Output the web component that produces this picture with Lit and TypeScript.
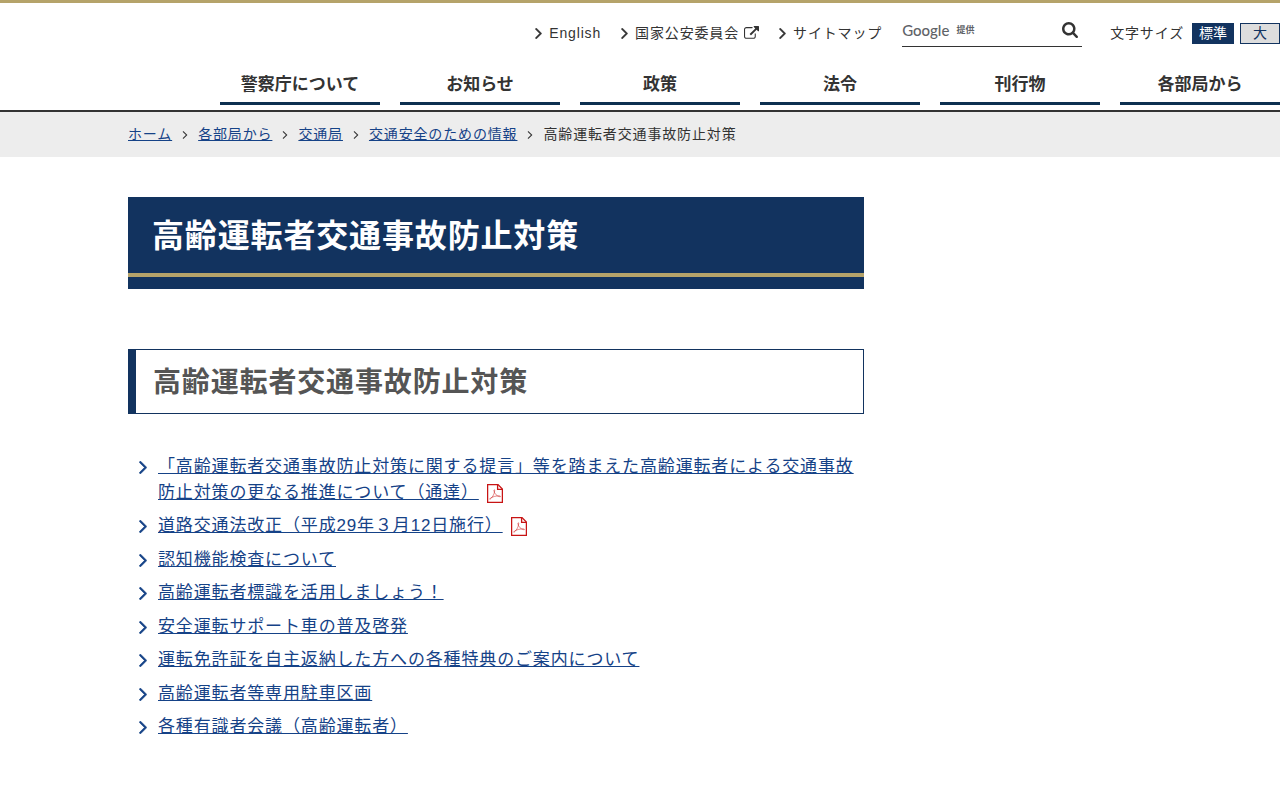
import { LitElement, html, css } from "lit";
import { customElement, state } from "lit/decorators.js";

const angle = (cls: string) => html`<svg class=${cls} viewBox="576 448 608 1024" aria-hidden="true">
  <path d="M1171 960q0 13-10 23l-466 466q-10 10-23 10t-23-10l-50-50q-10-10-10-23t10-23l393-393-393-393q-10-10-10-23t10-23l50-50q10-10 23-10t23 10l466 466q10 10 10 23z"/>
</svg>`;

const external = html`<svg class="external" viewBox="0 0 1792 1792" role="img" aria-label="外部リンク">
  <path d="M1408 928v320q0 119-84.5 203.5t-203.5 84.5h-832q-119 0-203.5-84.5t-84.5-203.5v-832q0-119 84.5-203.5t203.5-84.5h704q14 0 23 9t9 23v64q0 14-9 23t-23 9h-704q-66 0-113 47t-47 113v832q0 66 47 113t113 47h832q66 0 113-47t47-113v-320q0-14 9-23t23-9h64q14 0 23 9t9 23zm384-864v512q0 26-19 45t-45 19-45-19l-176-176-652 652q-10 10-23 10t-23-10l-114-114q-10-10-10-23t10-23l652-652-176-176q-19-19-19-45t19-45 45-19h512q26 0 45 19t19 45z"/>
</svg>`;

const magnifier = html`<svg class="magnifier" viewBox="64 128 1664 1664" aria-hidden="true">
  <path d="M1216 832q0-185-131.5-316.5t-316.5-131.5-316.5 131.5-131.5 316.5 131.5 316.5 316.5 131.5 316.5-131.5 131.5-316.5zm512 832q0 52-38 90t-90 38q-54 0-90-38l-343-342q-179 124-399 124-143 0-273.5-55.5t-225-150-150-225-55.5-273.5 55.5-273.5 150-225 225-150 273.5-55.5 273.5 55.5 225 150 150 225 55.5 273.5q0 220-124 399l343 343q37 37 37 90z"/>
</svg>`;

const pdf = html`<svg class="pdf" viewBox="0 0 16 19" role="img" aria-label="PDF">
  <path class="sheet" d="M.6.6H11L15.4 5V18.4H.6Z"/>
  <path class="sheet" d="M10.6 .8V5.3H15.2"/>
  <path class="mark" d="M3 15.2C4.6 14.6 7.4 10.4 7.7 6.6C7.8 5.4 6.8 5.4 6.9 6.6C7.2 9.4 9.8 12.4 13 12.8C13.8 12.8 13.6 12 12.6 11.9C9.4 11.7 5.6 12.6 3.4 14.2C2.6 14.8 2.4 15.4 3 15.2"/>
</svg>`;

const sections = ["警察庁について", "お知らせ", "政策", "法令", "刊行物", "各部局から"];
const trail = ["ホーム", "各部局から", "交通局", "交通安全のための情報"];
const title = "高齢運転者交通事故防止対策";
const topics = [
  { text: "「高齢運転者交通事故防止対策に関する提言」等を踏まえた高齢運転者による交通事故防止対策の更なる推進について（通達）", pdf: true },
  { text: "道路交通法改正（平成29年３月12日施行）", pdf: true },
  { text: "認知機能検査について" },
  { text: "高齢運転者標識を活用しましょう！" },
  { text: "安全運転サポート車の普及啓発" },
  { text: "運転免許証を自主返納した方への各種特典のご案内について" },
  { text: "高齢運転者等専用駐車区画" },
  { text: "各種有識者会議（高齢運転者）" },
];

@customElement("site-header")
class SiteHeader extends LitElement {
  @state() private query = "";

  static styles = css`
    :host { display: block; border-top: 3px solid #b5a36a; border-bottom: 2px solid #333; }
    * { box-sizing: border-box; }
    svg { fill: currentColor; flex: none; }
    .tools { display: flex; justify-content: flex-end; align-items: center; padding-top: 16px; font-size: 14px; line-height: 28px; }
    .links { display: flex; gap: 20px; margin: 0 20px 0 0; padding: 0; list-style: none; }
    .links a { display: flex; align-items: center; gap: 7px; color: #333; text-decoration: none; }
    .angle { width: 7px; height: 11px; stroke: currentColor; stroke-width: 50; }
    .label { display: flex; align-items: center; gap: 5px; }
    .external { width: 15px; height: 15px; }
    .search { display: grid; grid-template-columns: minmax(0, 1fr) 24px; width: 180px; height: 28px; margin-right: 28px; border-bottom: 1px solid #333; }
    .brand { grid-area: 1 / 1; display: flex; align-items: center; gap: 7px; height: 22px; color: #5f6368; font: 500 15px/22px Lato, "Liberation Sans", sans-serif; letter-spacing: 0; pointer-events: none; z-index: 1; }
    .offer { font: 700 9px/22px "Liberation Sans", "Noto Sans CJK JP", sans-serif; }
    .query { grid-area: 1 / 1 / 2 / 2; width: 100%; border: 0; padding: 0; background: transparent; font: inherit; color: #333; outline: none; }
    .go { border: 0; padding: 0 4px 0 0; height: 22px; background: none; color: #333; display: flex; align-items: center; justify-content: flex-end; }
    .magnifier { width: 16px; height: 16px; }
    .sizes { display: flex; align-items: center; gap: 6px; }
    .caption { margin-right: 2px; }
    .size { height: 21px; border: 1px solid #12335f; padding: 0 12px; font: inherit; letter-spacing: 0; line-height: 19px; background: #ddd; color: #12335f; }
    .size.on { padding: 0 6px; background: #12335f; color: #fff; }
    .nav { display: grid; grid-template-columns: repeat(6, 160px); justify-content: end; gap: 20px; margin: 0; padding: 25px 0 5px; list-style: none; }
    .nav a { display: block; border-bottom: 3px solid #0d3050; padding-bottom: 4px; text-align: center; font-weight: 700; line-height: 26px; letter-spacing: 0; color: #333; text-decoration: none; }
  `;

  render() {
    return html`
      <div class="tools">
        <ul class="links">
          <li><a href="#english">${angle("angle")}<span class="label">English</span></a></li>
          <li><a href="#npsc">${angle("angle")}<span class="label">国家公安委員会${external}</span></a></li>
          <li><a href="#sitemap">${angle("angle")}<span class="label">サイトマップ</span></a></li>
        </ul>
        <form class="search" @submit=${(e: Event) => e.preventDefault()}>
          ${this.query ? null : html`<label class="brand" for="query">Google<span class="offer">提供</span></label>`}
          <input class="query" id="query" type="text" aria-label="サイト内検索" .value=${this.query}
            @input=${(e: Event) => (this.query = (e.target as HTMLInputElement).value)}>
          <button class="go" type="submit" aria-label="検索">${magnifier}</button>
        </form>
        <div class="sizes">
          <span class="caption">文字サイズ</span>
          <button class="size on" type="button">標準</button>
          <button class="size" type="button">大</button>
        </div>
      </div>
      <nav><ul class="nav">${sections.map((s) => html`<li><a href="#nav">${s}</a></li>`)}</ul></nav>
    `;
  }
}

@customElement("bread-crumbs")
class BreadCrumbs extends LitElement {
  static styles = css`
    :host { display: block; background: #ededed; padding: 12px 10%; font-size: 14px; line-height: 21px; }
    .trail { display: flex; flex-wrap: wrap; margin: 0; padding: 0; list-style: none; }
    .step { display: flex; align-items: center; }
    a { color: #154287; }
    .angle { width: 6px; height: 8px; margin: 0 10px; fill: #333; }
  `;

  render() {
    return html`<nav aria-label="パンくず"><ol class="trail">
      ${trail.map((t) => html`<li class="step"><a href="#trail">${t}</a>${angle("angle")}</li>`)}
      <li class="step">${title}</li>
    </ol></nav>`;
  }
}

@customElement("app-root")
class AppRoot extends LitElement {
  static styles = css`
    :host { display: block; background: #fff; color: #333; font-family: "Liberation Sans", "Noto Sans CJK JP", sans-serif; font-size: 17px; line-height: 1.5; letter-spacing: 0.05em; }
    * { box-sizing: border-box; }
    .page { display: grid; grid-template-columns: minmax(0, 1fr) 288px; padding: 40px 10% 60px; }
    h1 { margin: 0 0 60px; background: #12335f; color: #fff; font-size: 32px; line-height: 48px; padding-bottom: 12px; }
    .head { display: block; padding: 15px 24px 13px; border-bottom: 4px solid #b5a36a; }
    h2 { margin: 0 0 40px; border: 1px solid #12335f; border-left-width: 8px; padding: 11px 17px 9px; color: #555; font-size: 28px; line-height: 43px; }
    .topics { display: grid; gap: 8px; margin: 0; padding: 0 0 0 11px; list-style: none; }
    .topic { display: grid; grid-template-columns: 8px minmax(0, 1fr); gap: 11px; }
    .topic a { color: #154287; }
    .angle { width: 8px; height: 13px; margin-top: 7px; fill: #154287; stroke: #154287; stroke-width: 50; }
    .pdf { width: 16px; height: 19px; margin-left: 8px; vertical-align: -5px; fill: none; stroke: #c81414; }
    .sheet { stroke-width: 1.3; }
    .mark { stroke-width: 0.5; }
  `;

  render() {
    return html`
      <site-header></site-header>
      <bread-crumbs></bread-crumbs>
      <main class="page">
        <article>
          <h1><span class="head">${title}</span></h1>
          <h2>${title}</h2>
          <ul class="topics">
            ${topics.map((t) => html`<li class="topic">${angle("angle")}<span><a href="#topic">${t.text}</a>${t.pdf ? pdf : null}</span></li>`)}
          </ul>
        </article>
      </main>
    `;
  }
}
